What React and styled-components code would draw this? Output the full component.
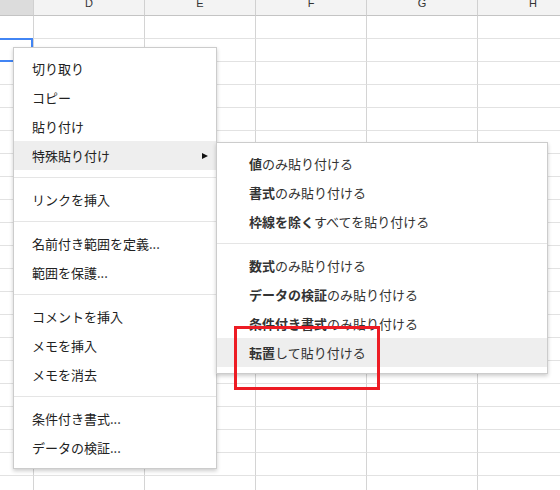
import React from 'react'
import styled, { createGlobalStyle } from 'styled-components'

const GlobalStyle = createGlobalStyle`
  body {
    margin: 0;
    background: #fff;
    font-family: "Liberation Sans", "Noto Sans CJK JP", sans-serif;
  }
`

const columns = [
  { label: '', width: 34, active: true },
  { label: 'D', width: 111 },
  { label: 'E', width: 111 },
  { label: 'F', width: 111 },
  { label: 'G', width: 111 },
  { label: 'H', width: 111 },
]

const ROWS = 21

const mainMenu = [
  ['切り取り', 'コピー', '貼り付け', { text: '特殊貼り付け', sub: true }],
  ['リンクを挿入'],
  ['名前付き範囲を定義...', '範囲を保護...'],
  ['コメントを挿入', 'メモを挿入', 'メモを消去'],
  ['条件付き書式...', 'データの検証...'],
]

// [bold part, rest]
const pasteMenu = [
  [
    ['値', 'のみ貼り付ける'],
    ['書式', 'のみ貼り付ける'],
    ['枠線を除く', 'すべてを貼り付ける'],
  ],
  [
    ['数式', 'のみ貼り付ける'],
    ['データの検証', 'のみ貼り付ける'],
    ['条件付き書式', 'のみ貼り付ける'],
    ['転置', 'して貼り付ける', true],
  ],
]

const App = () => {
  return (
    <>
      <GlobalStyle />
      <Page>
        <Sheet>
          <HeaderRow>
            {columns.map((c, i) => (
              <HeaderCell key={i} $w={c.width} $active={c.active}>
                <Letter>{c.label}</Letter>
              </HeaderCell>
            ))}
          </HeaderRow>
          {Array.from({ length: ROWS }).map((_, r) => (
            <Row key={r}>
              {columns.map((c, i) => (
                <Cell key={i} $w={c.width} $selected={r === 1 && i === 0} />
              ))}
            </Row>
          ))}
        </Sheet>

        <ContextMenu>
          {mainMenu.map((group, g) => (
            <React.Fragment key={g}>
              {g > 0 && <Separator />}
              {group.map((item) => {
                const text = typeof item === 'string' ? item : item.text
                const sub = typeof item !== 'string' && item.sub
                return (
                  <MenuItem key={text} $hover={sub}>
                    <span>{text}</span>
                    {sub && <Arrow />}
                  </MenuItem>
                )
              })}
            </React.Fragment>
          ))}
        </ContextMenu>

        <SubMenu>
          {pasteMenu.map((group, g) => (
            <React.Fragment key={g}>
              {g > 0 && <Separator />}
              {group.map(([strong, rest, hover]) => (
                <SubItem key={strong} $hover={hover}>
                  <b>{strong}</b>
                  {rest}
                </SubItem>
              ))}
            </React.Fragment>
          ))}
        </SubMenu>

        <Highlight />
      </Page>
    </>
  )
}

const Page = styled.div`
  position: relative;
  width: 560px;
  height: 490px;
  overflow: hidden;
  background: #fff;
`
const Sheet = styled.div`
  display: flex;
  flex-direction: column;
  width: max-content;
`
const HeaderRow = styled.div`
  display: flex;
  height: 16px;
`
const HeaderCell = styled.div`
  box-sizing: border-box;
  width: ${(p) => p.$w}px;
  height: 16px;
  flex: none;
  overflow: hidden;
  display: flex;
  justify-content: center;
  align-items: flex-start;
  background: ${(p) => (p.$active ? '#dcdcdc' : '#f3f3f3')};
  border-right: 1px solid #d0d0d0;
  border-bottom: 1px solid #c4c4c4;
`
const Letter = styled.span`
  font-family: "Liberation Sans", Arial, sans-serif;
  font-size: 11px;
  line-height: 11px;
  margin-top: -2px;
  color: #333;
`
const Row = styled.div`
  display: flex;
  height: 23px;
`
const Cell = styled.div`
  box-sizing: border-box;
  position: relative;
  width: ${(p) => p.$w}px;
  height: 23px;
  flex: none;
  border-right: 1px solid #d4d4d4;
  border-bottom: 1px solid #e2e2e2;
  &::after {
    content: "";
    display: ${(p) => (p.$selected ? 'block' : 'none')};
    position: absolute;
    top: -1px;
    right: 0;
    bottom: -1px;
    left: -10px;
    border: 2px solid #4285f4;
  }
`
const menuBox = `
  position: absolute;
  box-sizing: border-box;
  background: #fff;
  border: 1px solid rgba(0, 0, 0, 0.2);
  box-shadow: 0 2px 4px rgba(0, 0, 0, 0.2);
  padding: 6px 0;
  font-family: "Noto Sans CJK JP", "Liberation Sans", sans-serif;
  font-size: 13px;
  color: #222;
`
const ContextMenu = styled.div`
  ${menuBox}
  left: 13px;
  top: 47px;
  width: 204px;
`
const MenuItem = styled.div`
  display: flex;
  align-items: center;
  justify-content: space-between;
  height: 29px;
  padding: 0 8px 0 18px;
  background: ${(p) => (p.$hover ? '#eeeeee' : 'transparent')};
  white-space: nowrap;
`
const Arrow = styled.span`
  width: 0;
  height: 0;
  border-top: 3.5px solid transparent;
  border-bottom: 3.5px solid transparent;
  border-left: 6px solid #111;
`
const Separator = styled.div`
  height: 1px;
  margin: 7px 0;
  background: #e5e5e5;
`
const SubMenu = styled.div`
  ${menuBox}
  left: 216px;
  top: 142px;
  width: 332px;
  color: #333;
`
const SubItem = styled.div`
  display: flex;
  align-items: center;
  height: 29px;
  padding-left: 32px;
  background: ${(p) => (p.$hover ? '#eeeeee' : 'transparent')};
  white-space: nowrap;
  b {
    font-weight: 700;
  }
`
const Highlight = styled.div`
  position: absolute;
  left: 234px;
  top: 326px;
  width: 146px;
  height: 64px;
  box-sizing: border-box;
  border: 3px solid #ed1c24;
`

export default App
